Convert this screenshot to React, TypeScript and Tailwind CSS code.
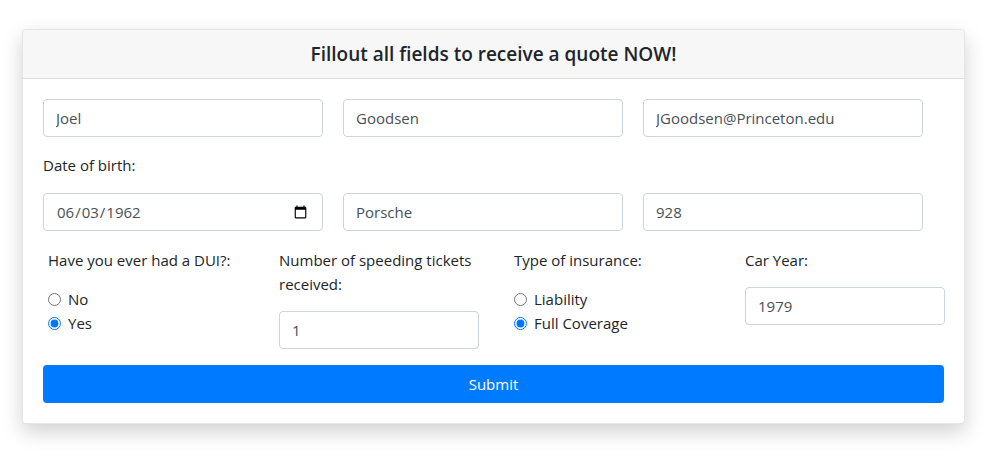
const inputCls =
  "h-[38px] w-[280px] rounded-[4px] border border-[#ced4da] bg-white px-3 text-[15px] text-[#495057] outline-none";

export default function App() {
  return (
    <div className="min-h-screen bg-white pt-[29px] pl-[22px] font-['Open_Sans',sans-serif] text-[15px] text-[#212529]">
      <div className="w-[943px] overflow-hidden rounded-[4px] border border-black/10 bg-white shadow-[0_8px_20px_rgba(0,0,0,0.18)]">
        {/* header */}
        <div className="flex h-[49px] items-center justify-center border-b border-black/10 bg-[#f7f7f7]">
          <h2 className="text-[19px] font-semibold text-[#212529]">
            Fillout all fields to receive a quote NOW!
          </h2>
        </div>

        <form className="p-5">
          <div className="flex gap-[20px]">
            <input className={inputCls} defaultValue="Joel" />
            <input className={inputCls} defaultValue="Goodsen" />
            <input className={inputCls} defaultValue="JGoodsen@Princeton.edu" />
          </div>

          <label className="mt-[16px] block leading-6">Date of birth:</label>

          <div className="mt-[16px] flex gap-[20px]">
            <input type="date" className={inputCls} defaultValue="1962-06-03" />
            <input className={inputCls} defaultValue="Porsche" />
            <input className={inputCls} defaultValue="928" />
          </div>

          <div className="mt-[17px] grid grid-cols-[231px_235px_231px_200px] pl-[5px]">
            <div>
              <p className="leading-6">Have you ever had a DUI?:</p>
              <div className="mt-[15px] flex flex-col">
                <label className="flex h-6 items-center gap-[7px]">
                  <input type="radio" name="dui" className="m-0 h-[13px] w-[13px]" />
                  No
                </label>
                <label className="flex h-6 items-center gap-[7px]">
                  <input type="radio" name="dui" defaultChecked className="m-0 h-[13px] w-[13px]" />
                  Yes
                </label>
              </div>
            </div>

            <div>
              <p className="w-[210px] leading-6">Number of speeding tickets received:</p>
              <input className={inputCls + " mt-[15px] !w-[200px]"} defaultValue="1" />
            </div>

            <div>
              <p className="leading-6">Type of insurance:</p>
              <div className="mt-[15px] flex flex-col">
                <label className="flex h-6 items-center gap-[7px]">
                  <input type="radio" name="ins" className="m-0 h-[13px] w-[13px]" />
                  Liability
                </label>
                <label className="flex h-6 items-center gap-[7px]">
                  <input type="radio" name="ins" defaultChecked className="m-0 h-[13px] w-[13px]" />
                  Full Coverage
                </label>
              </div>
            </div>

            <div>
              <p className="leading-6">Car Year:</p>
              <input className={inputCls + " mt-[15px] !w-[200px]"} defaultValue="1979" />
            </div>
          </div>

          <button
            type="button"
            className="mt-[16px] h-[38px] w-full rounded-[4px] bg-[#007bff] text-[15px] text-white"
          >
            Submit
          </button>
        </form>
      </div>
    </div>
  );
}
